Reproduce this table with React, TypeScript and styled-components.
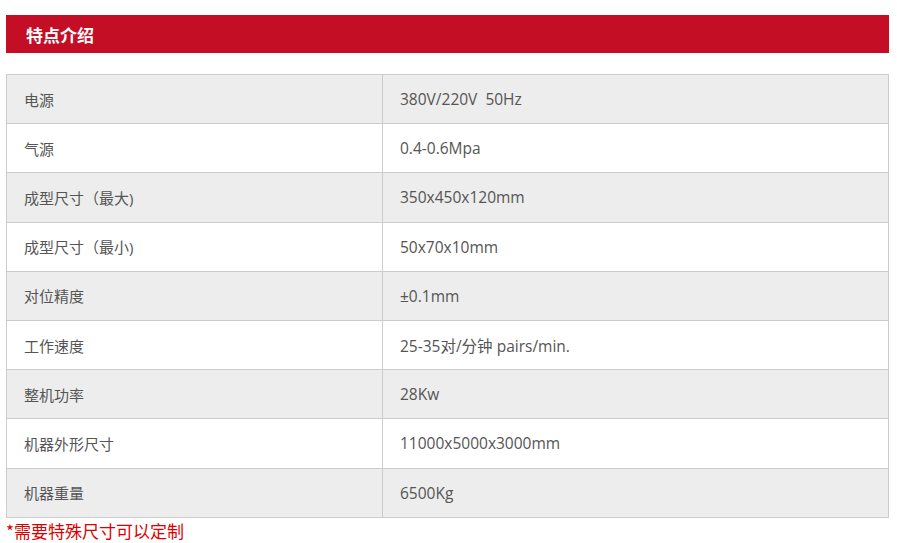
import styled, { createGlobalStyle } from "styled-components";

const GlobalStyle = createGlobalStyle`
  html, body {
    margin: 0;
    padding: 0;
    background: #fff;
    font-family: "Open Sans", "Noto Sans CJK SC", sans-serif;
  }
`;

const specs: [string, string][] = [
  ["电源", "380V/220V  50Hz"],
  ["气源", "0.4-0.6Mpa"],
  ["成型尺寸（最大)", "350x450x120mm"],
  ["成型尺寸（最小)", "50x70x10mm"],
  ["对位精度", "±0.1mm"],
  ["工作速度", "25-35对/分钟 pairs/min."],
  ["整机功率", "28Kw"],
  ["机器外形尺寸", "11000x5000x3000mm"],
  ["机器重量", "6500Kg"],
];

const Page = styled.div`
  width: 883px;
  padding: 15px 0 0 6px;
`;

const TitleBar = styled.div`
  height: 38px;
  background: #c40e26;
  color: #fff;
  font-family: "Noto Sans CJK SC", sans-serif;
  font-size: 17px;
  font-weight: 700;
  display: flex;
  align-items: center;
  padding-left: 20px;
`;

const SpecTable = styled.table`
  margin-top: 21px;
  width: 100%;
  border-collapse: collapse;
  border: 1px solid #cccccc;
`;

const Row = styled.tr<{ $shaded: boolean }>`
  background: ${(p) => (p.$shaded ? "#ededed" : "#ffffff")};
`;

const Cell = styled.td<{ $first?: boolean }>`
  height: 48.2px;
  padding: 0 0 0 17px;
  border: 1px solid #cccccc;
  font-size: ${(p) => (p.$first ? "15px" : "15.5px")};
  color: #555555;
  width: ${(p) => (p.$first ? "358px" : "auto")};
  white-space: pre;
`;

const Note = styled.p`
  margin: 1px 0 0;
  font-family: "Noto Sans CJK SC", sans-serif;
  font-size: 17px;
  color: #dd0000;
  line-height: 24px;
`;

export default function App() {
  return (
    <Page>
      <GlobalStyle />
      <TitleBar>特点介绍</TitleBar>
      <SpecTable>
        <tbody>
          {specs.map(([k, v], i) => (
            <Row key={k} $shaded={i % 2 === 0}>
              <Cell $first>{k}</Cell>
              <Cell>{v}</Cell>
            </Row>
          ))}
        </tbody>
      </SpecTable>
      <Note>*需要特殊尺寸可以定制</Note>
    </Page>
  );
}
